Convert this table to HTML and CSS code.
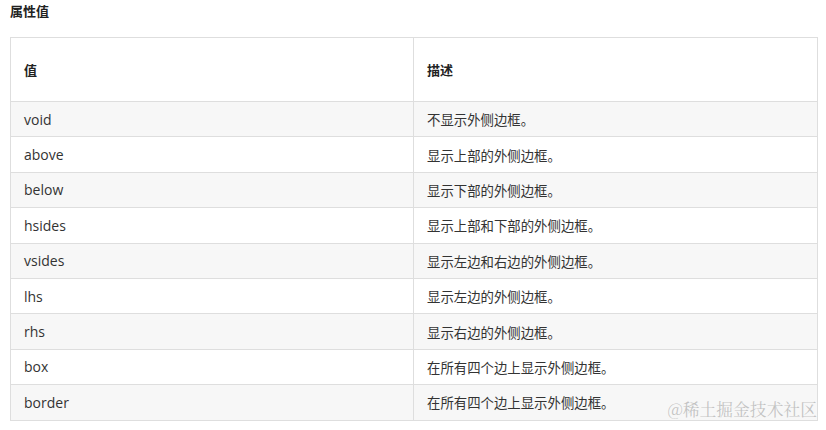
FILE: index.html
```html
<!DOCTYPE html>
<html lang="zh">
<head>
<meta charset="utf-8">
<link rel="stylesheet" href="styles.css">
</head>
<body>
<div class="page">
  <h4 class="title">属性值</h4>
  <table class="attr-table">
    <colgroup><col class="col-value"><col></colgroup>
    <thead>
      <tr><th>值</th><th>描述</th></tr>
    </thead>
    <tbody>
      <tr><td>void</td><td class="desc">不显示外侧边框。</td></tr>
      <tr><td>above</td><td class="desc">显示上部的外侧边框。</td></tr>
      <tr><td>below</td><td class="desc">显示下部的外侧边框。</td></tr>
      <tr><td>hsides</td><td class="desc">显示上部和下部的外侧边框。</td></tr>
      <tr><td>vsides</td><td class="desc">显示左边和右边的外侧边框。</td></tr>
      <tr><td>lhs</td><td class="desc">显示左边的外侧边框。</td></tr>
      <tr><td>rhs</td><td class="desc">显示右边的外侧边框。</td></tr>
      <tr><td>box</td><td class="desc">在所有四个边上显示外侧边框。</td></tr>
      <tr><td>border</td><td class="desc">在所有四个边上显示外侧边框。</td></tr>
    </tbody>
  </table>
  <div class="watermark">@稀土掘金技术社区</div>
</div>
</body>
</html>
```
FILE: styles.css
```css
html, body {
  margin: 0;
  padding: 0;
  background: #fff;
}
body {
  font-family: "Open Sans", "Noto Sans CJK SC", sans-serif;
  color: #333;
}
.page {
  position: relative;
  width: 826px;
  height: 430px;
  padding: 0 8px 0 10px;
  box-sizing: border-box;
}
.title {
  margin: 0;
  padding-top: 2px;
  height: 35px;
  font-size: 13px;
  line-height: 17px;
  font-weight: bold;
  font-family: "Noto Sans CJK SC", sans-serif;
  color: #222;
}
.attr-table {
  width: 808px;
  border-collapse: collapse;
  table-layout: fixed;
}
.col-value {
  width: 403px;
}
.attr-table th,
.attr-table td {
  border: 1px solid #dedede;
  text-align: left;
  vertical-align: middle;
  padding: 0 13px;
}
.attr-table thead tr {
  height: 64px;
}
.attr-table th {
  font-size: 13px;
  font-weight: bold;
  font-family: "Noto Sans CJK SC", sans-serif;
  color: #222;
}
.attr-table tbody tr {
  height: 35.4px;
}
.attr-table td {
  font-size: 14px;
  color: #333;
}
.attr-table td.desc {
  font-size: 13.4px;
  font-family: "Noto Sans CJK SC", sans-serif;
  color: #333;
}
.attr-table tbody tr:nth-child(odd) {
  background: #f7f7f7;
}
.watermark {
  position: absolute;
  right: 9px;
  bottom: 9px;
  font-family: "Noto Serif CJK SC", "Liberation Serif", serif;
  font-size: 16.8px;
  color: rgba(150, 150, 150, 0.55);
  white-space: nowrap;
}
```
